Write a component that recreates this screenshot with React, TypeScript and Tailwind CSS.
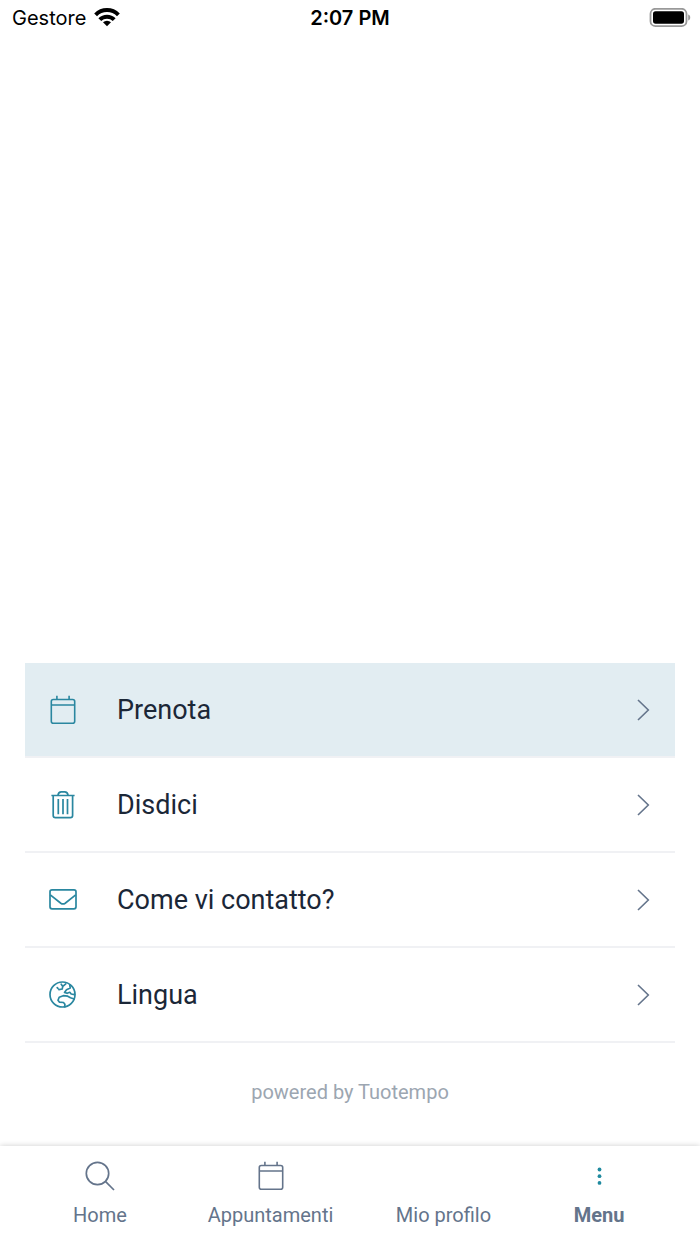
import React, { useState } from "react";

interface IconProps {
  className?: string;
}

const WifiIcon: React.FC = () => (
  <svg width="26" height="20" viewBox="0 0 26 20" fill="none" stroke="#000" strokeWidth="4" aria-hidden="true">
    <path d="M1.600 6.800a16.200 16.200 0 0 1 22.800 0" />
    <path d="M5.800 11.700a10.200 10.200 0 0 1 14.400 0" />
    <path d="M13 18.300l-4-4a5.700 5.700 0 0 1 8 0z" fill="#000" stroke="none" />
  </svg>
);

const BatteryIcon: React.FC = () => (
  <svg width="43" height="20" viewBox="0 0 43 20" aria-hidden="true">
    <rect x="1.500" y="0.800" width="36" height="17.400" rx="5" fill="none" stroke="#999" strokeWidth="1.800" />
    <rect x="4" y="3.300" width="31" height="12.400" rx="2.600" fill="#000" />
    <path d="M39.200 6.500c1.600.6 2 1.600 2 3s-.4 2.400-2 3z" fill="#999" />
  </svg>
);

const CalendarIcon: React.FC<IconProps> = ({ className }) => (
  <svg width="28" height="32" viewBox="0 0 28 32" fill="none" stroke="currentColor" strokeWidth="1.6" className={className} aria-hidden="true">
    <rect x="2.300" y="5.500" width="23.400" height="23.800" rx="2" />
    <path d="M2.300 11h23.400M7.900 1.800v3.700M20.100 1.800v3.700" />
  </svg>
);

const TrashIcon: React.FC<IconProps> = ({ className }) => (
  <svg width="28" height="32" viewBox="0 0 28 32" fill="none" stroke="currentColor" strokeWidth="1.7" className={className} aria-hidden="true">
    <path d="M2.400 6.500h23.200M4.200 6.500v20a2.200 2.200 0 0 0 2.200 2.200h15a2.200 2.200 0 0 0 2.200-2.200v-20" />
    <path d="M9 6.200c.3-2.300 1.500-3.400 3.300-3.400h3.400c1.800 0 3 1.100 3.300 3.400" />
    <path d="M9.300 10v15.300M14 10v15.300M18.500 10v15.300" />
  </svg>
);

const MailIcon: React.FC<IconProps> = ({ className }) => (
  <svg width="28" height="32" viewBox="0 0 28 32" fill="none" stroke="currentColor" strokeWidth="1.7" className={className} aria-hidden="true">
    <rect x="1" y="5.800" width="26" height="19" rx="2" />
    <path d="M1.300 10.800l10.500 8.400c1.700 1.200 2.700 1.200 4.400 0l10.500-8.400" />
  </svg>
);

const GlobeIcon: React.FC<IconProps> = ({ className }) => (
  <svg width="28" height="32" viewBox="0 0 28 32" fill="none" stroke="currentColor" strokeWidth="1.700" strokeLinecap="round" strokeLinejoin="round" className={className} aria-hidden="true">
    <circle cx="13.500" cy="15.500" r="12.500" />
    <path d="M8.200 8.600l.7.700M12.200 5.200l1.600 2.200 3-2.600M13.800 7.400l-.6 2.600-3.300.6" />
    <path d="M20.800 5.800l.4 3.200-3.700 1.700-2 2.700 2.600.9 2.700-1 1.400 1.700 3.300.6" />
    <path d="M25.200 20l-3.700-1.200-2.800-1.600-4.500-.5-4 1.500-1.200 3 1.500 2 4 .3 1.400 1.700-.2 2.500" />
  </svg>
);

const SearchIcon: React.FC<IconProps> = ({ className }) => (
  <svg width="32" height="32" viewBox="0 0 32 32" fill="none" stroke="currentColor" strokeWidth="1.700" className={className} aria-hidden="true">
    <circle cx="13.500" cy="13.500" r="11.200" />
    <path d="M21.400 21.400l8.600 8.600" />
  </svg>
);

const DotsIcon: React.FC<IconProps> = ({ className }) => (
  <svg width="32" height="32" viewBox="0 0 32 32" fill="currentColor" className={className} aria-hidden="true">
    <circle cx="16.500" cy="9.500" r="1.900" />
    <circle cx="16.500" cy="16.200" r="1.900" />
    <circle cx="16.500" cy="22.900" r="1.900" />
  </svg>
);

const ChevronIcon: React.FC = () => (
  <svg width="14" height="24" viewBox="0 0 14 24" fill="none" stroke="#64748b" strokeWidth="1.600" aria-hidden="true">
    <path d="M1 2l10.300 10L1 22" />
  </svg>
);

const menuItems = [
  { label: "Prenota", Icon: CalendarIcon },
  { label: "Disdici", Icon: TrashIcon },
  { label: "Come vi contatto?", Icon: MailIcon },
  { label: "Lingua", Icon: GlobeIcon },
];

const tabs = [
  { label: "Home", Icon: SearchIcon },
  { label: "Appuntamenti", Icon: CalendarIcon },
  { label: "Mio profilo", Icon: null },
  { label: "Menu", Icon: DotsIcon },
];

const App: React.FC = () => {
  const [selected, setSelected] = useState("Prenota");
  const [activeTab, setActiveTab] = useState("Menu");

  return (
    <div className="flex min-h-screen flex-col bg-white font-['Roboto',sans-serif]">
      <header className="grid grid-cols-3 items-center px-3 pt-1 font-['Inter',sans-serif] text-xl text-black">
        <div className="flex items-center gap-2">
          <span>Gestore</span>
          <WifiIcon />
        </div>
        <span className="text-center font-semibold">2:07 PM</span>
        <div className="-mr-1 flex justify-end">
          <BatteryIcon />
        </div>
      </header>

      <main className="flex flex-1 flex-col justify-end">
        <ul className="mx-[25px]">
          {menuItems.map(({ label, Icon }) => (
            <li key={label}>
              <button
                type="button"
                onClick={() => setSelected(label)}
                className={`flex h-[95px] w-full items-center border-b-2 border-[#f0f1f4] px-6 text-left text-[27px] leading-9 text-[#1b2737] ${
                  selected === label ? "bg-[#e2edf2]" : "bg-white"
                }`}
              >
                <Icon className="text-[#2a87a0]" />
                <span className="ml-10 flex-1 pt-px">{label}</span>
                <ChevronIcon />
              </button>
            </li>
          ))}
        </ul>
        <p className="pt-9 pb-[41px] text-center text-xl leading-[26px] text-[#9ca6b1]">powered by Tuotempo</p>
      </main>

      <nav className="grid grid-cols-[152fr_189fr_157fr_154fr] px-6 py-[14px] shadow-[0_0_6px_rgba(0,0,0,0.2)]">
        {tabs.map(({ label, Icon }) => (
          <button
            key={label}
            type="button"
            onClick={() => setActiveTab(label)}
            className={`flex flex-col items-center gap-2 text-xl leading-[30px] text-[#64748b] ${
              activeTab === label ? "font-bold" : ""
            }`}
          >
            <span className="flex h-8 items-center">
              {Icon && <Icon className={activeTab === label ? "text-[#1f8a9f]" : ""} />}
            </span>
            <span>{label}</span>
          </button>
        ))}
      </nav>
    </div>
  );
};

export default App;
